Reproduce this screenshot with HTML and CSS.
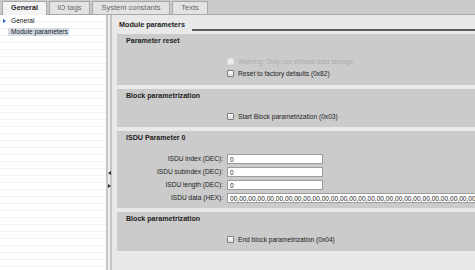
FILE: index.html
```html
<!DOCTYPE html>
<html lang="en">
<head>
    <meta charset="UTF-8">
    <meta name="viewport" content="width=device-width, initial-scale=1.0">
    <title>Module parameters</title>
    <link rel="stylesheet" href="styles.css">
</head>
<body>
    <div class="tabs">
        <div class="tab tab-general active">General</div>
        <div class="tab tab-io">IO tags</div>
        <div class="tab tab-const">System constants</div>
        <div class="tab tab-texts">Texts</div>
    </div>

    <div class="main">
        <div class="tree">
            <div class="tree-row"><span class="arrow"></span>General</div>
            <div class="tree-row"><span class="selected">Module parameters</span></div>
        </div>

        <div class="splitter">
            <div class="grip">
                <span class="grip-left"></span>
                <span class="grip-right"></span>
            </div>
        </div>

        <div class="content">
            <div class="head">
                <h1>Module parameters</h1>
                <div class="rule"></div>
            </div>

            <div class="panel">
                <h2>Parameter reset</h2>
                <div class="check disabled"><span class="box"></span>Warning: Only use without data storage</div>
                <div class="check"><span class="box"></span>Reset to factory defaults (0x82)</div>
            </div>

            <div class="panel">
                <h2>Block parametrization</h2>
                <div class="check"><span class="box"></span>Start Block parametrization (0x03)</div>
            </div>

            <div class="panel">
                <h2>ISDU Parameter 0</h2>
                <div class="fields">
                    <label>ISDU index (DEC):</label>
                    <input type="text" value="0">
                    <label>ISDU subindex (DEC):</label>
                    <input type="text" value="0">
                    <label>ISDU length (DEC):</label>
                    <input type="text" value="0">
                    <label>ISDU data (HEX):</label>
                    <input type="text" class="wide" value="00,00,00,00,00,00,00,00,00,00,00,00,00,00,00,00,00,00,00,00,00,00,00,00,00,00,00,00,00,00,00,00">
                </div>
            </div>

            <div class="panel">
                <h2>Block parametrization</h2>
                <div class="check"><span class="box"></span>End block parametrization (0x04)</div>
            </div>
        </div>
    </div>
</body>
</html>
```

FILE: styles.css
```css
* {
    box-sizing: border-box;
}

body {
    margin: 0;
    width: 475px;
    height: 270px;
    overflow: hidden;
    font-family: "Liberation Sans", Arial, sans-serif;
    font-size: 6.6px;
    color: #222;
    background-color: #e9e9e9;
}

/* tab strip */
.tabs {
    display: flex;
    align-items: flex-end;
    gap: 2px;
    height: 15px;
    padding-left: 2px;
    background-color: #cbcbcb;
    border-bottom: 1px solid #a8a8a8;
}

.tab {
    height: 13px;
    line-height: 12px;
    text-align: center;
    font-size: 7.5px;
    color: #666;
    background-color: #e3e3e3;
    border: 1px solid #a6a6a6;
    border-bottom: none;
}

.tab.active {
    height: 14px;
    margin-bottom: -1px;
    background-color: #f4f4f4;
    color: #1e1e1e;
    font-weight: bold;
    font-size: 7.2px;
}

.tab-general { width: 45px; }
.tab-io { width: 41px; }
.tab-const { width: 78px; }
.tab-texts { width: 36px; }

.main {
    display: flex;
    height: 255px;
}

/* navigation tree */
.tree {
    width: 106px;
    background-color: #fff;
    background-image: repeating-linear-gradient(to bottom, transparent 0, transparent 6px, #f3f3f3 6px, #f3f3f3 7px);
}

.tree-row {
    display: flex;
    align-items: center;
    height: 11px;
    padding-left: 3px;
    white-space: nowrap;
}

.arrow {
    width: 0;
    height: 0;
    margin-right: 5px;
    border-left: 3px solid #1f5cc0;
    border-top: 2.5px solid transparent;
    border-bottom: 2.5px solid transparent;
}

.selected {
    margin-left: 5px;
    padding: 0 1px 0 3px;
    line-height: 8px;
    background-color: #d5dde7;
}

/* splitter between tree and editor */
.splitter {
    width: 6px;
    border-left: 2px solid #c5c5c5;
    border-right: 2px solid #c5c5c5;
    background-color: #efefef;
}

.grip {
    display: flex;
    flex-direction: column;
    gap: 9px;
    margin-top: 156px;
}

.grip-left {
    width: 0;
    height: 0;
    border-right: 3px solid #2e2e2e;
    border-top: 2px solid transparent;
    border-bottom: 2px solid transparent;
}

.grip-right {
    width: 0;
    height: 0;
    border-left: 3px solid #2e2e2e;
    border-top: 2px solid transparent;
    border-bottom: 2px solid transparent;
}

/* editor */
.content {
    flex: 1;
    min-width: 0;
    padding-left: 5px;
    overflow: hidden;
}

.head {
    display: flex;
    align-items: flex-end;
    height: 16px;
    margin-bottom: 3px;
    padding-left: 2px;
}

.head h1 {
    margin: 0 0 2px;
    font-size: 7.2px;
    line-height: 8px;
    white-space: nowrap;
}

.head .rule {
    flex: 1;
    margin-left: 7px;
    border-bottom: 2px solid #5c5c5c;
}

.panel {
    margin-bottom: 4px;
    padding: 3px 0 5px;
    background-color: #cbcbcb;
    overflow: hidden;
}

.panel h2 {
    margin: 0 0 9.5px;
    padding-left: 9px;
    font-size: 7.1px;
    line-height: 9px;
}

.check {
    display: flex;
    align-items: center;
    gap: 4px;
    height: 12px;
    padding-left: 110px;
    white-space: nowrap;
}

.box {
    width: 7px;
    height: 7px;
    border: 1px solid #7e7e7e;
    border-radius: 1px;
    background: linear-gradient(#fbfbfb, #e0e0e0);
}

.check.disabled {
    color: #ababab;
}

.check.disabled .box {
    border-color: #dcdcdc;
    background: #ececec;
}

.fields {
    display: grid;
    grid-template-columns: 106px 96px;
    column-gap: 4px;
    row-gap: 3px;
    margin-top: 11px;
}

.fields label {
    text-align: right;
    line-height: 10px;
    white-space: nowrap;
}

.fields input {
    width: 96px;
    height: 10px;
    margin: 0;
    padding: 0 2px;
    border: 1px solid #9c9c9c;
    background-color: #fff;
    font-family: inherit;
    font-size: 6.6px;
    color: #222;
    outline: none;
}

.fields input.wide {
    width: 260px;
}
```
